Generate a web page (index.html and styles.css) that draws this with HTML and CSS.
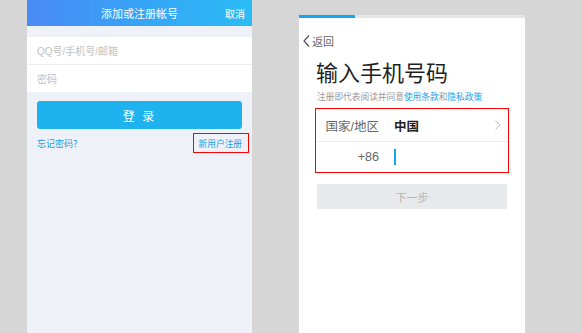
FILE: index.html
```html
<!DOCTYPE html>
<html lang="zh-CN">
<head>
    <meta charset="UTF-8">
    <title>注册帐号</title>
    <link rel="stylesheet" href="styles.css">
</head>
<body>

<div class="screens">
    <!-- Left: login screen -->
    <div class="phone phone-login">
        <div class="login-header">
            <span></span>
            <div class="login-title">添加或注册帐号</div>
            <div class="login-cancel">取消</div>
        </div>

        <div class="login-form">
            <div class="login-row">QQ号/手机号/邮箱</div>
            <div class="login-row">密码</div>
        </div>

        <button class="login-btn">登 录</button>

        <div class="login-links">
            <span class="link">忘记密码？</span>
            <span class="link link-marked">新用户注册</span>
        </div>
    </div>

    <!-- Right: phone number step -->
    <div class="phone phone-register">
        <div class="progress"><div class="progress-fill"></div></div>

        <div class="back">
            <svg width="7" height="12" viewBox="0 0 7 12">
                <polyline points="6,0.5 1,6 6,11.5" fill="none" stroke="#555" stroke-width="1.2"/>
            </svg>
            <span>返回</span>
        </div>

        <div class="reg-title">输入手机号码</div>
        <div class="reg-note">注册即代表阅读并同意<span class="blue">使用条款</span>和<span class="blue">隐私政策</span></div>

        <div class="reg-box">
            <div class="reg-row">
                <div class="reg-label">国家/地区</div>
                <div class="reg-value">中国</div>
                <svg class="chevron" width="6" height="10" viewBox="0 0 6 10">
                    <polyline points="0.5,0.5 5,5 0.5,9.5" fill="none" stroke="#c4c4c4" stroke-width="1"/>
                </svg>
            </div>
            <div class="reg-row">
                <div class="reg-label">+86</div>
                <div class="cursor"></div>
            </div>
        </div>

        <button class="next-btn">下一步</button>
    </div>
</div>

</body>
</html>
```

FILE: styles.css
```css
* {
    margin: 0;
    padding: 0;
    box-sizing: border-box;
    font-family: "Liberation Sans", "Noto Sans CJK SC", sans-serif;
}

body {
    background-color: #d6d6d6;
    width: 582px;
    height: 333px;
    overflow: hidden;
}

.screens {
    display: flex;
    align-items: flex-start;
    padding-left: 27px;
    gap: 47px;
}

.phone {
    display: flex;
    flex-direction: column;
}

/* Left screen */

.phone-login {
    width: 225px;
    height: 333px;
    background-color: #eef1f8;
}

.login-header {
    height: 26px;
    display: grid;
    grid-template-columns: 1fr auto 1fr;
    align-items: center;
    background: linear-gradient(90deg, #4a8af5 0%, #35a6f6 55%, #2bbcf6 100%);
    color: #fff;
}

.login-title {
    font-size: 11px;
}

.login-cancel {
    justify-self: end;
    padding-right: 7px;
    font-size: 10px;
}

.login-form {
    margin-top: 11px;
    background-color: #fff;
}

.login-row {
    height: 27px;
    display: flex;
    align-items: center;
    padding-left: 10px;
    font-size: 10px;
    color: #c2c2c2;
}

.login-row + .login-row {
    height: 28px;
    border-top: 1px solid #ededed;
}

.login-btn {
    margin: 9px 10px 0;
    height: 28px;
    border: none;
    border-radius: 3px;
    background-color: #1eb3ee;
    color: #fff;
    font-size: 12px;
    letter-spacing: 2px;
}

.login-links {
    display: flex;
    justify-content: space-between;
    align-items: center;
    margin-top: 4px;
    padding: 0 3px 0 10px;
}

.link {
    font-size: 9px;
    color: #229fe0;
}

.link-marked {
    border: 1px solid #f00;
    height: 20px;
    padding: 0 6px 0 5px;
    font-size: 8.7px;
    display: flex;
    align-items: center;
}

/* Right screen */

.phone-register {
    width: 226px;
    height: 318px;
    margin-top: 15px;
    background-color: #fff;
}

.progress {
    height: 3px;
    background-color: #e6e6e6;
}

.progress-fill {
    width: 56px;
    height: 3px;
    background-color: #16a6ee;
}

.back {
    display: flex;
    align-items: center;
    gap: 2px;
    margin-top: 15px;
    padding-left: 4px;
    height: 16px;
    font-size: 11px;
    color: #666;
}

.reg-title {
    margin-top: 12px;
    padding-left: 17px;
    font-size: 22px;
    line-height: 26px;
    color: #1e1e1e;
}

.reg-note {
    margin-top: 4px;
    padding-left: 18px;
    font-size: 8.7px;
    line-height: 12px;
    color: #9a9a9a;
    white-space: nowrap;
}

.blue {
    color: #17a2ec;
}

.reg-box {
    margin: 5px 0 0 16px;
    width: 194px;
    border: 1px solid #f00;
}

.reg-row {
    height: 32px;
    display: flex;
    align-items: center;
    padding: 0 7px 0 9px;
}

.reg-row + .reg-row {
    border-top: 1px solid #ededed;
    height: 31px;
}

.reg-label {
    width: 54px;
    text-align: right;
    font-size: 12.5px;
    color: #666;
}

.reg-value {
    margin-left: 15px;
    flex: 1;
    font-size: 12.5px;
    font-weight: bold;
    color: #222;
}

.cursor {
    margin-left: 15px;
    width: 1.5px;
    height: 16px;
    background-color: #16a6ee;
}

.next-btn {
    margin: 11px 0 0 18px;
    width: 190px;
    height: 25px;
    border: none;
    border-radius: 2px;
    background-color: #e8e9eb;
    color: #b5b5b5;
    font-size: 11px;
}
```
